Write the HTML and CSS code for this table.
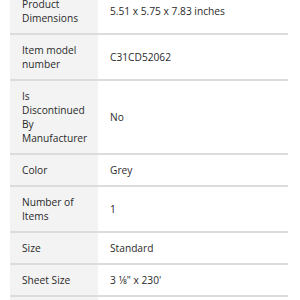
FILE: index.html
```html
<!DOCTYPE html>
<html>
<head>
<meta charset="utf-8">
<link rel="stylesheet" href="styles.css">
</head>
<body>
<table class="specs">
  <tr><th>Product Dimensions</th><td>5.51 x 5.75 x 7.83 inches</td></tr>
  <tr><th>Item model number</th><td>C31CD52062</td></tr>
  <tr><th>Is Discontinued By Manufacturer</th><td>No</td></tr>
  <tr><th>Color</th><td>Grey</td></tr>
  <tr><th>Number of Items</th><td>1</td></tr>
  <tr><th>Size</th><td>Standard</td></tr>
  <tr><th>Sheet Size</th><td>3 1⁄8" x 230'</td></tr>
  <tr class="next"><th></th><td></td></tr>
</table>
</body>
</html>
```

FILE: styles.css
```css
html, body {
  margin: 0;
  padding: 0;
  background: #ffffff;
  overflow: hidden;
}
body {
  padding: 0 12px 0 10px;
}
.specs {
  width: 278px;
  table-layout: fixed;
  margin-top: -11px;
  border-collapse: collapse;
  font-family: "Open Sans", "Noto Sans", sans-serif;
  font-size: 10.2px;
  line-height: 14px;
  color: #2a2a2a;
}
.specs th,
.specs td {
  padding: 8px 6px 8px 12px;
  border-bottom: 2px solid #dcdcdc;
  vertical-align: middle;
  text-align: left;
  font-weight: normal;
}
.specs th {
  width: 70px;
  background: #f3f3f3;
}
.specs .next th,
.specs .next td {
  height: 14px;
  border-bottom: 0;
}
```
